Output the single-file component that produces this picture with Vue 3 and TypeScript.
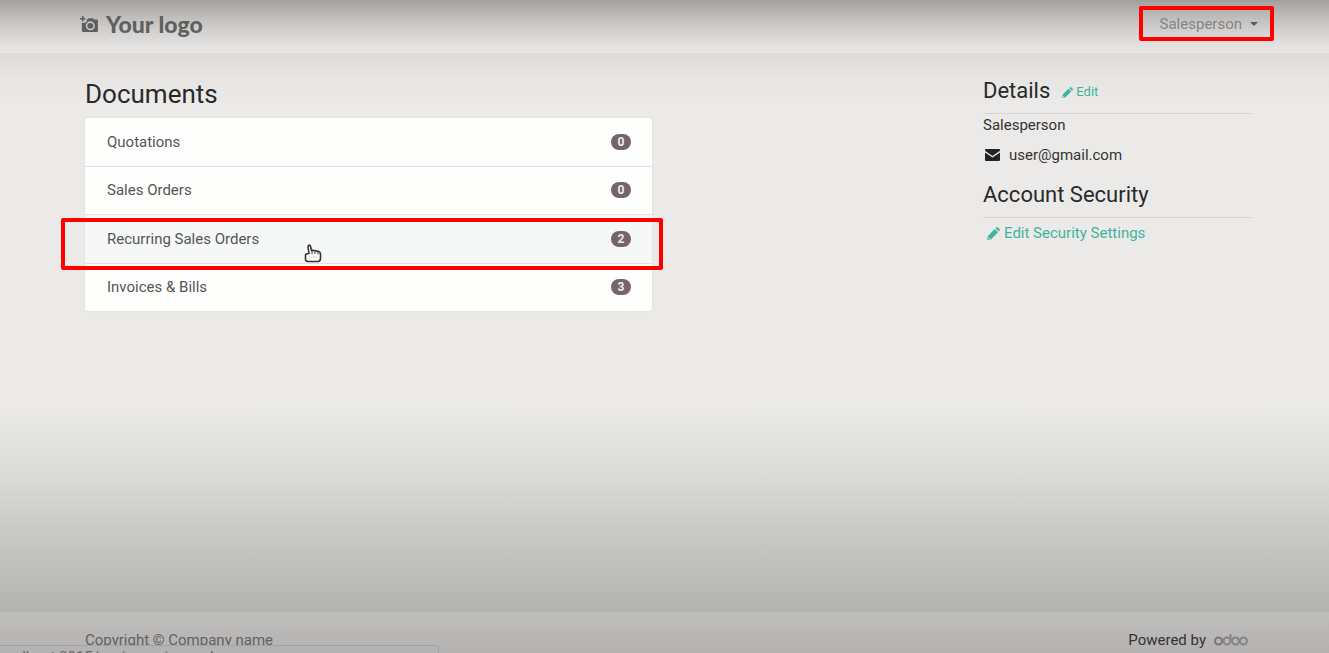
<script setup lang="ts">
interface DocumentLink {
  label: string
  count: number
  active?: boolean
}

const documents: DocumentLink[] = [
  { label: 'Quotations', count: 0 },
  { label: 'Sales Orders', count: 0 },
  { label: 'Recurring Sales Orders', count: 2, active: true },
  { label: 'Invoices & Bills', count: 3 },
]
const pencil =
  'M0 16l1-5L9.500 2.500l4 4L5 15zM10.400 1.600l1-1q1-1 2 0l2 2q1 1 0 2l-1 1zM1.600 12.600l-.5 2.300 2.300-.5z'
</script>

<template>
  <div class="page">
    <header class="topbar">
      <a class="logo" href="#">
        <svg class="logo-icon" viewBox="0 0 20 19" aria-hidden="true">
          <path
            fill="currentColor"
            fill-rule="evenodd"
            d="M7.500 4H8l1.500-1.500h5L16 4h2.500A1.500 1.500 0 0 1 20 5.500v11a1.500 1.500 0 0 1-1.500 1.500h-15A1.500 1.500 0 0 1 2 16.500V7.500h4l1.500-1.500zM11.500 6a5 5 0 1 0 0 10a5 5 0 0 0 0-10zm0 1.700a3.300 3.300 0 1 1 0 6.600a3.300 3.300 0 0 1 0-6.600z"
          />
          <circle cx="11.500" cy="11" r="2" fill="currentColor" />
          <path d="M3 0v6M0 3h6" stroke="currentColor" stroke-width="1.800" />
        </svg>
        <span>Your logo</span>
      </a>
      <button class="user-menu" type="button">
        Salesperson
        <svg class="caret" viewBox="0 0 8 4" aria-hidden="true"><path fill="currentColor" d="M0 0h8L4 4z" /></svg>
      </button>
    </header>

    <main class="content">
      <section class="documents">
        <h1>Documents</h1>
        <nav class="doc-list" aria-label="Documents">
          <a v-for="doc in documents" :key="doc.label" class="doc" :class="{ active: doc.active }" href="#">
            <span>{{ doc.label }}</span>
            <span class="badge">{{ doc.count }}</span>
          </a>
        </nav>
      </section>

      <aside class="sidebar">
        <div class="heading">
          <h2>Details</h2>
          <a class="edit small" href="#">
            <svg viewBox="0 0 16 16" aria-hidden="true"><path fill="currentColor" fill-rule="evenodd" :d="pencil" /></svg>
            Edit
          </a>
        </div>
        <p class="name">Salesperson</p>
        <p class="mail">
          <svg viewBox="0 0 15 12" aria-hidden="true">
            <path fill="currentColor" d="M1 0h13q1 0 1 1v.8L7.500 7 0 1.800V1q0-1 1-1zM0 3.400l7.500 5.200L15 3.400V11q0 1-1 1H1q-1 0-1-1z" />
          </svg>
          user@gmail.com
        </p>
        <div class="heading security">
          <h2>Account Security</h2>
        </div>
        <a class="edit" href="#">
          <svg viewBox="0 0 16 16" aria-hidden="true"><path fill="currentColor" fill-rule="evenodd" :d="pencil" /></svg>
          Edit Security Settings
        </a>
      </aside>
    </main>

    <footer class="footer">
      <span class="copyright">Copyright © Company name</span>
      <span class="powered">
        Powered by
        <svg class="odoo" viewBox="0 0 34 12" role="img" aria-label="odoo" fill="none" stroke-width="2">
          <circle cx="4.500" cy="7" r="3.500" stroke="#866f76" />
          <circle cx="13" cy="7" r="3.500" stroke="#858484" />
          <path d="M16.500 0v7" stroke="#858484" />
          <circle cx="21.500" cy="7" r="3.500" stroke="#858484" />
          <circle cx="29.500" cy="7" r="3.500" stroke="#858484" />
        </svg>
      </span>
    </footer>

    <div class="status">localhost:8015/my/recurring_orders</div>

    <svg class="pointer" viewBox="0 0 18 19" aria-hidden="true">
      <path
        d="M4.500 1.500q1.500-1 2 .7l1 4.300 1.500-.3 1 .5 1.700-.2 1 .8 1.800-.1q2 .8 2 2.800v4q0 3.500-2.500 3.500H4q-2.500 0-2.500-2.500v-4q.3-1.500 3.500-1.500L4 3z"
        fill="#fff"
        stroke="#333"
        stroke-width="1.600"
        stroke-linejoin="round"
      />
      <path d="M8 7v3M11 7.500V10M14 8v2.500" stroke="#333" />
      <path d="M5.500 13h8" stroke="#aaa" stroke-dasharray="1 1" />
    </svg>
  </div>
</template>

<style>
body {
  margin: 0;
}
</style>

<style scoped>
.page {
  position: relative;
  display: flex;
  flex-direction: column;
  height: 100vh;
  overflow: hidden;
  font: 15px/22px Roboto, "Liberation Sans", sans-serif;
  color: #333;
  background: #ebeae9;
}
h1,
h2,
p {
  margin: 0;
  font-weight: 400;
}
a {
  color: inherit;
  text-decoration: none;
}
.topbar {
  display: flex;
  justify-content: space-between;
  align-items: flex-start;
  box-sizing: border-box;
  flex: none;
  height: 53px;
  padding: 6px 55px 0 80px;
  background: linear-gradient(#a09f9e, #b8b7b6 24%, #d0cfce 55%, #e2e1e0 85%, #e7e6e5);
}
.logo {
  display: flex;
  align-items: center;
  gap: 8px;
  height: 36px;
  font: 900 23px/36px Lato, sans-serif;
  color: #60605f;
}
.logo-icon {
  width: 18px;
  height: 17px;
}
.user-menu {
  display: flex;
  align-items: center;
  justify-content: flex-end;
  gap: 8px;
  box-sizing: border-box;
  width: 135px;
  height: 35px;
  padding: 0 12px 0 0;
  border: 4px solid #f00;
  border-radius: 2px;
  background: none;
  font: inherit;
  color: #858484;
}
.caret {
  width: 8px;
  height: 4px;
  color: #5a5a5a;
}
.content {
  display: flex;
  justify-content: space-between;
  flex: 1;
  padding: 24px 77px 0 85px;
  background: linear-gradient(#dddcda, #e6e5e4 24px, #ebeae9 50px, #ebeae9 355px, #dbdbda 420px, #cdcdcc 465px, #c0c0be 510px, #b3b3b1 559px);
}
.documents {
  width: 567px;
}
h1 {
  font-size: 26px;
  line-height: 34px;
  color: #292929;
}
.doc-list {
  display: flex;
  flex-direction: column;
  min-height: 193px;
  margin-top: 7px;
  border-radius: 3px;
  background: #fefefd;
  box-shadow: 0 0 2px #d8d7d6;
}
.doc {
  position: relative;
  display: flex;
  flex: 1;
  justify-content: space-between;
  align-items: center;
  padding: 0 21px 0 22px;
  color: #555;
}
.doc + .doc {
  border-top: 1px solid #e2e2e2;
}
.active {
  background: #f6f8f8;
}
.active::after {
  content: "";
  position: absolute;
  inset: 3px -11px -7px -24px;
  z-index: 1;
  border: 4px solid #f00;
  border-radius: 2px;
}
.badge {
  min-width: 20px;
  border-radius: 8px;
  background: #75646d;
  font-size: 12px;
  font-weight: 700;
  line-height: 16px;
  text-align: center;
  color: #eee;
}
.sidebar {
  width: 269px;
}
.heading {
  display: flex;
  align-items: center;
  gap: 12px;
  height: 36px;
  border-bottom: 1px solid #d6d5d4;
}
h2 {
  font-size: 22px;
  line-height: 30px;
  margin-bottom: 8px;
  color: #292929;
}
.edit {
  display: flex;
  align-items: center;
  gap: 4px;
  margin-left: 4px;
  color: #3fb39d;
}
.edit svg {
  width: 13px;
  height: 13px;
}
.small {
  gap: 3px;
  margin: 0 0 6px;
  font-size: 13px;
}
.small svg {
  width: 11px;
  height: 11px;
}
.mail {
  display: flex;
  align-items: center;
  gap: 9px;
  margin: 8px 0 0 2px;
}
.mail svg {
  width: 15px;
  height: 12px;
  color: #222;
}
.security {
  margin: 15px 0 4px;
}
.footer {
  display: flex;
  justify-content: space-between;
  align-items: flex-start;
  flex: none;
  box-sizing: border-box;
  height: 41px;
  padding: 17px 81px 0 85px;
  background: linear-gradient(#bfbebc, #b3b2b1);
}
.copyright {
  color: #626161;
}
.powered {
  display: flex;
  align-items: center;
  gap: 8px;
}
.odoo {
  width: 34px;
  height: 12px;
}
.status {
  position: absolute;
  left: 0;
  bottom: 0;
  box-sizing: border-box;
  width: 439px;
  height: 8px;
  overflow: hidden;
  border: 1px solid #a3a2a2;
  border-width: 1px 1px 0 0;
  border-radius: 0 3px 0 0;
  background: #b4b2b2;
  line-height: 22px;
  text-indent: -6px;
  color: #686767;
}
.pointer {
  position: absolute;
  left: 304px;
  top: 244px;
  z-index: 2;
  width: 18px;
  height: 19px;
}
</style>
